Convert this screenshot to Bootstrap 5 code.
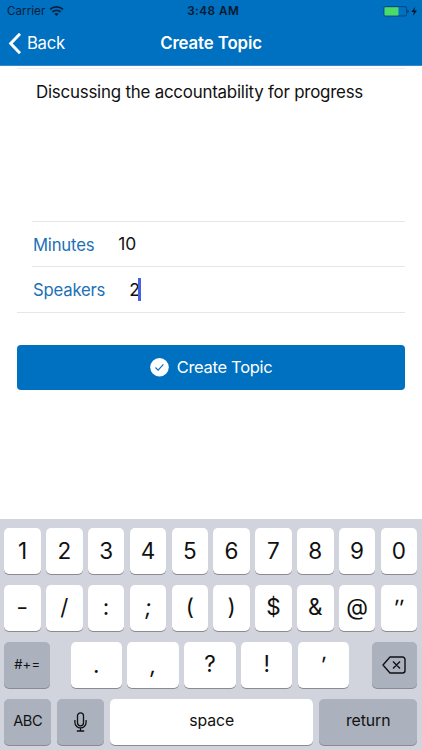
<!DOCTYPE html>
<html lang="en">
<head>
<meta charset="utf-8">
<meta name="viewport" content="width=device-width, initial-scale=1">
<title>Create Topic</title>
<link href="https://cdn.jsdelivr.net/npm/bootstrap@5.3.0/dist/css/bootstrap.min.css" rel="stylesheet">
<style>
body{font-family:Inter,"Liberation Sans",sans-serif;height:750px;overflow:hidden;color:#111;line-height:1.2}
.top-bar{background:#0070c0;height:65.5px;border-bottom:1px solid #2f8bce}
.status{height:22px;font-size:11.7px;color:#06213d;padding:1px 4.5px 0 7px}
.status>*{flex:1 1 0}
.status .clock{font-weight:600;letter-spacing:.5px;color:#041a30;padding-left:2px}
.title-row{height:43px;font-size:16.7px;letter-spacing:-.3px;padding:0 8px}
.title-row>*{flex:1 1 0}
.title-row .heading{font-weight:600;font-size:16.8px;letter-spacing:-.1px;white-space:nowrap;flex:0 0 auto}
.back-text{margin-left:5px}
.form-area{height:453.5px;padding:2.5px 17px 0}
.topic{height:153px;border-top:1px solid #ececf1;padding:12.5px 0 0 19px;font-size:16.9px;letter-spacing:-.22px}
.field-row{height:45.3px;border-top:1px solid #e6e6e8;margin-left:15px;padding:1px 0 0 1px;font-size:16.7px;letter-spacing:-.2px}
.field-row label{color:#1b70b4}
.field-row .amount{font-size:17.4px;letter-spacing:0}
.base-line{border-top:1px solid #e6e6e8}
.caret{width:3px;height:23px;background:#4763e4;margin-left:-2px}
.btn-topic{background:#0070c0;color:#fff;height:45.5px;border-radius:4px;font-size:16.5px;letter-spacing:-.3px;margin-top:32px;border:0}
.btn-topic span{padding-top:1px}
.keyboard{background:#d1d4dc;height:231px;padding:9px 4.8px 0 4.2px;gap:11px}
.key-row{height:46px;gap:5.3px}
.key{background:#fff;border-radius:5px;box-shadow:0 1px 0 #898b90;font-size:22.5px;color:#111;min-width:0;padding-bottom:1px}
.key.util{background:#abb1bd}
.key.word{font-size:15.8px;letter-spacing:-.1px;padding-bottom:2px}
.key.abc{font-size:14.6px;letter-spacing:-.4px;padding-bottom:0}
.key.sym{font-size:13px;letter-spacing:.2px;padding-bottom:0}
.slant{transform:skewX(-5deg)}
.stretch{transform:scaleX(1.15)}
.w-sym{width:46px}.w-punct{width:51.2px}.w-del{width:45.5px}.w-fn{width:47px}.w-ret{width:98px}
.punct{gap:5.7px;margin-right:2px}
.last-row{gap:6px}
</style>
<script src="https://cdn.jsdelivr.net/npm/bootstrap@5.3.0/dist/js/bootstrap.bundle.min.js"></script>
</head>
<body class="bg-white d-flex flex-column">
<header class="top-bar flex-shrink-0">
  <div class="status d-flex align-items-center">
    <div class="d-flex align-items-center"><span>Carrier</span>
      <svg class="ms-1" width="15" height="11" viewBox="0 0 14 10" fill="none" stroke="#06213d" stroke-width="1.6"><path d="M1 3.100C4.300 0 9.700 0 13 3.100M3.100 5.400c2.200-2 5.600-2 7.800 0"/><path d="M4.900 7.100c1.200-1 3-1 4.200 0L7 9.200z" fill="#06213d" stroke="none"/></svg>
    </div>
    <div class="clock text-center">3:48 AM</div>
    <div class="d-flex justify-content-end align-items-center">
      <svg width="35" height="11" viewBox="0 0 35 11"><rect x=".9" y=".6" width="22.600" height="9.400" rx="1.500" fill="none" stroke="#06477c"/><rect x="1.500" y="1.200" width="14" height="8.200" rx=".6" fill="#4cdb68"/><path d="M24.500 3.700c1.400.2 1.400 3 0 3.200z" fill="#06213d"/><path d="M32.200.800 28.400 6h2.500l-1 4L34 4.600h-2.700z" fill="#06172b"/></svg>
    </div>
  </div>
  <div class="title-row d-flex align-items-center text-white">
    <div class="d-flex align-items-center"><svg width="14" height="22" viewBox="0 0 14 22" fill="none" stroke="#fff" stroke-width="3"><path d="M12 .8 2.700 10.500 12 20.200"/></svg><span class="back-text">Back</span></div>
    <div class="heading">Create Topic</div>
    <div></div>
  </div>
</header>
<main class="form-area flex-shrink-0">
  <div class="topic">Discussing the accountability for progress</div>
  <div class="field-row d-flex align-items-center"><label>Minutes</label><span class="amount ms-4">10</span></div>
  <div class="field-row d-flex align-items-center"><label>Speakers</label><span class="amount ms-4">2</span><i class="caret"></i></div>
  <div class="base-line"></div>
  <button class="btn btn-topic w-100 d-flex align-items-center justify-content-center gap-2 p-0" type="button">
    <svg width="19" height="19" viewBox="0 0 18 18"><circle cx="9" cy="8.800" r="8.800" fill="#fff"/><path d="m5.200 9 2.500 2.500 5-5.400" fill="none" stroke="#0070c0" stroke-width="1.100"/></svg><span>Create Topic</span>
  </button>
</main>
<section class="keyboard d-flex flex-column flex-shrink-0">
  <div class="key-row d-flex">
    <div class="key col d-flex align-items-center justify-content-center">1</div><div class="key col d-flex align-items-center justify-content-center">2</div><div class="key col d-flex align-items-center justify-content-center">3</div><div class="key col d-flex align-items-center justify-content-center">4</div><div class="key col d-flex align-items-center justify-content-center">5</div><div class="key col d-flex align-items-center justify-content-center">6</div><div class="key col d-flex align-items-center justify-content-center">7</div><div class="key col d-flex align-items-center justify-content-center">8</div><div class="key col d-flex align-items-center justify-content-center">9</div><div class="key col d-flex align-items-center justify-content-center">0</div>
  </div>
  <div class="key-row d-flex">
    <div class="key col d-flex align-items-center justify-content-center pb-1"><span class="stretch">-</span></div><div class="key col d-flex align-items-center justify-content-center pb-1">/</div><div class="key col d-flex align-items-center justify-content-center pb-1">:</div><div class="key col d-flex align-items-center justify-content-center pb-1"><span class="slant">;</span></div><div class="key col d-flex align-items-center justify-content-center pb-1">(</div><div class="key col d-flex align-items-center justify-content-center pb-1">)</div><div class="key col d-flex align-items-center justify-content-center pb-1">$</div><div class="key col d-flex align-items-center justify-content-center pb-1">&amp;</div><div class="key col d-flex align-items-center justify-content-center pb-1">@</div><div class="key col d-flex align-items-center justify-content-center"><span class="slant">″</span></div>
  </div>
  <div class="key-row d-flex justify-content-between">
    <div class="key util sym w-sym d-flex align-items-center justify-content-center">#+=</div>
    <div class="punct d-flex">
      <div class="key w-punct d-flex align-items-center justify-content-center">.</div><div class="key w-punct d-flex align-items-center justify-content-center"><span class="slant">,</span></div><div class="key w-punct d-flex align-items-center justify-content-center pb-1">?</div><div class="key w-punct d-flex align-items-center justify-content-center pb-1">!</div><div class="key w-punct d-flex align-items-center justify-content-center"><span class="slant">′</span></div>
    </div>
    <div class="key util w-del d-flex align-items-center justify-content-center"><svg width="24" height="18" viewBox="0 0 24 18" fill="none" stroke="#111" stroke-width="1.400" stroke-linejoin="round"><path d="M8 1h12.500a2.500 2.500 0 0 1 2.500 2.500v11a2.500 2.500 0 0 1-2.500 2.500H8L1 9zM11 5.500l7 7m0-7-7 7"/></svg></div>
  </div>
  <div class="key-row last-row d-flex">
    <div class="key util word abc w-fn d-flex align-items-center justify-content-center">ABC</div>
    <div class="key util w-fn d-flex align-items-center justify-content-center"><svg width="13" height="20" viewBox="0 0 13 20" fill="none" stroke="#111" stroke-width="1.300"><rect x="3.500" y=".8" width="6" height="13" rx="3"/><path d="M.9 8v2.300c0 7.300 11.200 7.300 11.200 0V8M6.500 15.800V19M2.800 19h7.400"/></svg></div>
    <div class="key word col d-flex align-items-center justify-content-center">space</div>
    <div class="key util word w-ret d-flex align-items-center justify-content-center">return</div>
  </div>
</section>
</body>
</html>
